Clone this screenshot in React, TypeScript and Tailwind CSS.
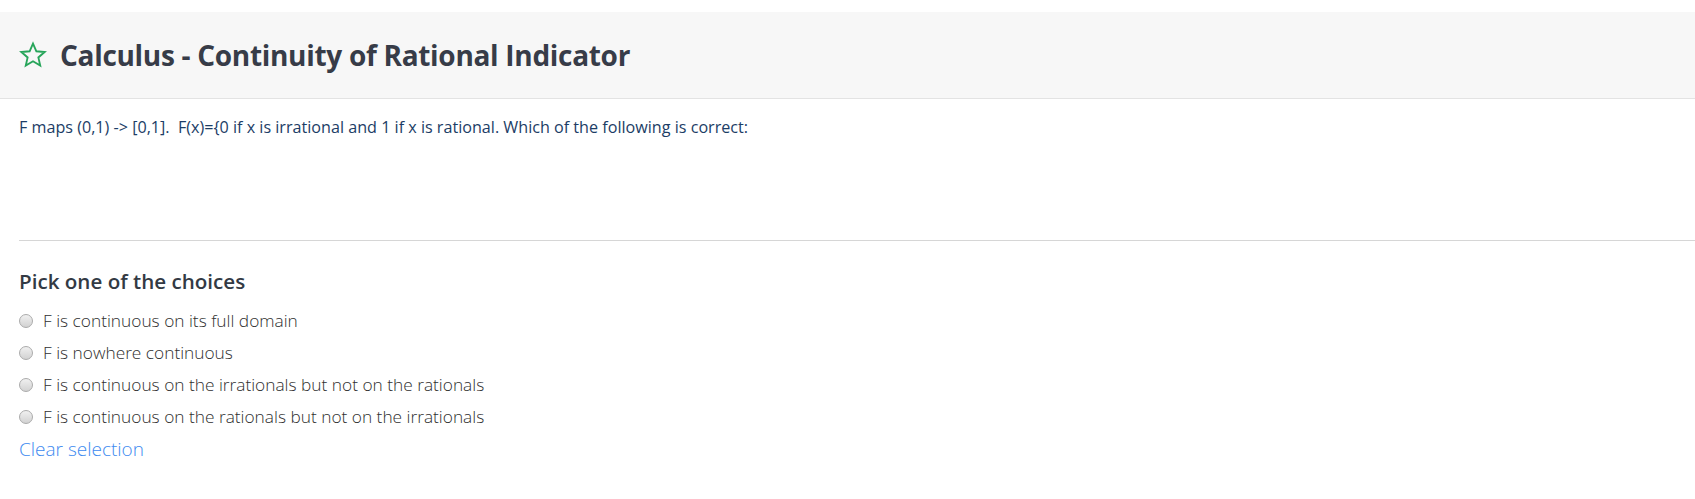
import { useState } from "react";

const choices = [
  "F is continuous on its full domain",
  "F is nowhere continuous",
  "F is continuous on the irrationals but not on the rationals",
  "F is continuous on the rationals but not on the irrationals",
];

const StarIcon = () => (
  <svg viewBox="0 0 24 24" className="h-[28px] w-[30px]" fill="none" stroke="#27a55a" strokeWidth="1.6" strokeLinejoin="miter">
    <path d="M12 2.2l2.9 6.6 7.1.6-5.4 4.7 1.6 7-6.2-3.7-6.2 3.7 1.6-7L2 9.4l7.1-.6z" />
  </svg>
);

export default function App() {
  const [picked, setPicked] = useState<number | null>(null);

  return (
    <div className="min-h-screen bg-white pt-[12px] font-['Open_Sans',sans-serif]">
      <div className="flex h-[87px] items-center gap-[12px] border-b border-[#e3e3e3] bg-[#f7f7f7] pl-[18px]">
        <StarIcon />
        <h1 className="text-[28px] font-bold tracking-[-0.3px] text-[#373c48]">Calculus - Continuity of Rational Indicator</h1>
      </div>

      <div className="pl-[19px]">
        <p className="h-[141px] pt-[17px] text-[16.15px] leading-[22px] text-[#1c3d66]">
          F maps (0,1) -&gt; [0,1].&nbsp; F(x)={"{"}0 if x is irrational and 1 if x is rational. Which of the following is correct:
        </p>
        <div className="border-t border-[#d6d6d6]" />

        <h2 className="mt-[26px] text-[20.6px] font-semibold leading-[28px] text-[#333a44]">Pick one of the choices</h2>
        <div className="mt-[10px] flex flex-col">
          {choices.map((c, i) => (
            <label key={c} className="flex h-[32px] cursor-pointer items-center gap-[10px] text-[17.3px] font-light text-[#2f2f2f]">
              <span className="flex h-[14px] w-[14px] items-center justify-center rounded-full border border-[#ababab] bg-gradient-to-b from-[#f0f0f0] to-[#d2d2d2]">
                {picked === i && <span className="h-[6px] w-[6px] rounded-full bg-[#333]" />}
              </span>
              <input type="radio" name="choice" className="hidden" checked={picked === i} onChange={() => setPicked(i)} />
              {c}
            </label>
          ))}
        </div>
        <button type="button" onClick={() => setPicked(null)} className="mt-[2px] text-[19px] font-light text-[#3d8af0]">
          Clear selection
        </button>
      </div>
    </div>
  );
}
